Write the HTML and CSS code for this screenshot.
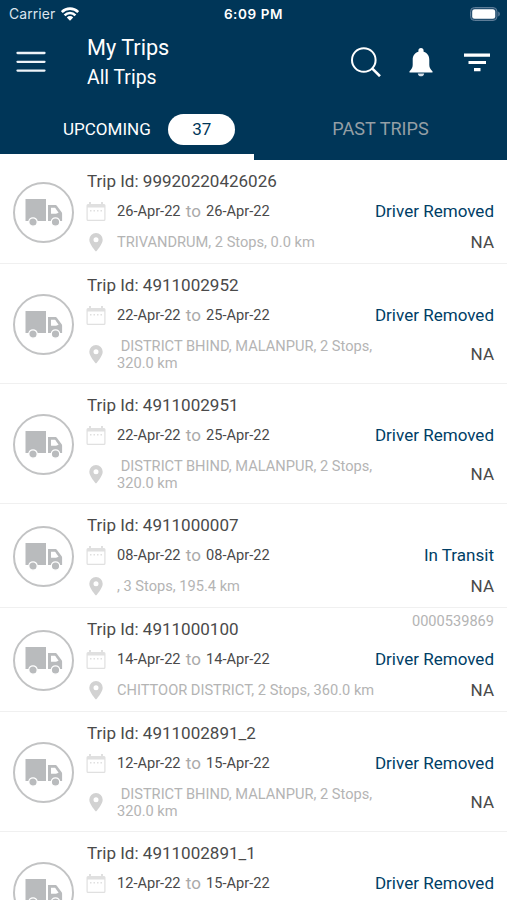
FILE: index.html
```html
<!DOCTYPE html>
<html lang="en">
<head>
<meta charset="utf-8">
<title>My Trips</title>
<link rel="stylesheet" href="styles.css">
</head>
<body>
<svg class="defs" aria-hidden="true">
  <symbol id="truck" viewBox="0 0 38 29">
    <path fill="#b9bbbd" d="M.5 1h20.500v22H.5zM23 7h7c1 0 1.500.3 2 1l4.500 6c.4.500.6 1 .6 1.600V23H23z"/>
    <path fill="#fff" d="M26 9.800h3.300c.5 0 .8.100 1.100.5l3.200 4.500-2.600.9H26z"/>
    <circle cx="8" cy="24" r="4.200" fill="#b9bbbd" stroke="#fff" stroke-width="1.200"/>
    <circle cx="30.500" cy="24" r="4.200" fill="#b9bbbd" stroke="#fff" stroke-width="1.200"/>
  </symbol>
  <symbol id="calendar" viewBox="0 0 20 19">
    <path fill="currentColor" fill-rule="evenodd" d="M3 0h2v2h10V0h2v2h1a1.500 1.500 0 0 1 1.500 1.500v14A1.500 1.500 0 0 1 18 19H2A1.500 1.500 0 0 1 .5 17.500v-14A1.500 1.500 0 0 1 2 2h1zM1.700 5.500v11.700c0 .4.200.6.600.6h15.400c.4 0 .6-.2.600-.6V5.500z"/>
    <path fill="currentColor" d="M4 8h1.500v1.500H4zM7.500 8H9v1.500H7.500zM11 8h1.500v1.500H11zM14.500 8H16v1.500h-1.500z"/>
  </symbol>
  <symbol id="pin" viewBox="0 0 14 19">
    <path fill="currentColor" fill-rule="evenodd" d="M7 0a6.700 6.700 0 0 0-6.700 6.700C.3 11.500 7 18.500 7 18.500s6.700-7 6.700-11.800A6.700 6.700 0 0 0 7 0zm0 4.200a2.500 2.500 0 1 1 0 5 2.500 2.500 0 0 1 0-5z"/>
  </symbol>
</svg>

<header class="header">
  <div class="status">
    <div class="carrier"><span>Carrier</span>
      <svg width="18" height="14" viewBox="0 0 18 14"><g fill="none" stroke="#fff" stroke-width="2.600"><path d="M.8 5a11.600 11.600 0 0 1 16.400 0"/><path d="M3.600 8.300a7.600 7.600 0 0 1 10.800 0"/></g><path fill="#fff" d="M5.800 10.400a4.500 4.500 0 0 1 6.400 0L9 13.700z"/></svg>
    </div>
    <div class="clock">6:09 PM</div>
    <svg class="battery" width="30" height="14" viewBox="0 0 30 14"><rect x=".5" y=".5" width="26.500" height="13" rx="4" fill="#244f70" stroke="#5d7d98"/><rect x="2.200" y="2.200" width="23" height="9.600" rx="2.500" fill="#fff"/><path d="M28.300 4.500q1.500.7 1.500 2.500t-1.500 2.500z" fill="#6985a0"/></svg>
  </div>
  <div class="bar">
    <svg class="menu" width="30" height="22" viewBox="0 0 30 22"><path d="M1.500 2h27M1.500 10.800h27M1.500 19.600h27" stroke="#eef3f8" stroke-width="2.300" stroke-linecap="round"/></svg>
    <div class="titles"><h1>My Trips</h1><h2>All Trips</h2></div>
    <div class="actions">
      <svg width="30" height="30" viewBox="0 0 30 30"><g fill="none" stroke="#fff" stroke-width="2"><circle cx="12.800" cy="13" r="11.800"/><path d="M21.100 21.300l7.900 7.900" stroke-width="2.600"/></g></svg>
      <svg width="24" height="29" viewBox="0 0 24 29"><path fill="#fff" d="M12 0c1.600 0 2.600 1 2.600 2.700v1.100C18.800 5 20.300 8.300 20.300 12v5c0 3 1.500 4.500 3.200 6.200v1.300H.5v-1.300C2.200 21.500 3.700 20 3.700 17v-5c0-3.700 1.500-7 5.700-8.200V2.700C9.400 1 10.400 0 12 0z"/><path fill="#d5dee7" d="M8.800 25.500h6.400c-.4 3.800-6 3.800-6.400 0z"/></svg>
      <svg width="26" height="19" viewBox="0 0 26 19"><path fill="#fff" d="M0 .5h26v3.200H0zM4.500 8h17.500v3H4.500zM10 15h6.500v3.200H10z"/></svg>
    </div>
  </div>
  <nav class="tabs">
    <div class="tab active"><span class="upcoming">UPCOMING</span><span class="count">37</span></div>
    <div class="tab"><span class="past">PAST TRIPS</span></div>
  </nav>
</header>

<main>
  <article class="trip">
    <div class="avatar"><svg><use href="#truck"/></svg></div>
    <div class="info">
      <div class="line top"><span class="id">Trip Id: 99920220426026</span></div>
      <div class="line"><svg class="cal"><use href="#calendar"/></svg><span class="dates">26-Apr-22<i>to</i>26-Apr-22</span><span class="state">Driver Removed</span></div>
      <div class="line place"><svg class="pin"><use href="#pin"/></svg><span class="route">TRIVANDRUM, 2 Stops, 0.0 km</span><span class="na">NA</span></div>
    </div>
  </article>
  <article class="trip">
    <div class="avatar"><svg><use href="#truck"/></svg></div>
    <div class="info">
      <div class="line top"><span class="id">Trip Id: 4911002952</span></div>
      <div class="line"><svg class="cal"><use href="#calendar"/></svg><span class="dates">22-Apr-22<i>to</i>25-Apr-22</span><span class="state">Driver Removed</span></div>
      <div class="line place two"><svg class="pin"><use href="#pin"/></svg><span class="route"> DISTRICT BHIND, MALANPUR, 2 Stops,
320.0 km</span><span class="na">NA</span></div>
    </div>
  </article>
  <article class="trip">
    <div class="avatar"><svg><use href="#truck"/></svg></div>
    <div class="info">
      <div class="line top"><span class="id">Trip Id: 4911002951</span></div>
      <div class="line"><svg class="cal"><use href="#calendar"/></svg><span class="dates">22-Apr-22<i>to</i>25-Apr-22</span><span class="state">Driver Removed</span></div>
      <div class="line place two"><svg class="pin"><use href="#pin"/></svg><span class="route"> DISTRICT BHIND, MALANPUR, 2 Stops,
320.0 km</span><span class="na">NA</span></div>
    </div>
  </article>
  <article class="trip">
    <div class="avatar"><svg><use href="#truck"/></svg></div>
    <div class="info">
      <div class="line top"><span class="id">Trip Id: 4911000007</span></div>
      <div class="line"><svg class="cal"><use href="#calendar"/></svg><span class="dates">08-Apr-22<i>to</i>08-Apr-22</span><span class="state">In Transit</span></div>
      <div class="line place"><svg class="pin"><use href="#pin"/></svg><span class="route">, 3 Stops, 195.4 km</span><span class="na">NA</span></div>
    </div>
  </article>
  <article class="trip">
    <div class="avatar"><svg><use href="#truck"/></svg></div>
    <div class="info">
      <div class="line top"><span class="id">Trip Id: 4911000100</span><span class="ref">0000539869</span></div>
      <div class="line"><svg class="cal"><use href="#calendar"/></svg><span class="dates">14-Apr-22<i>to</i>14-Apr-22</span><span class="state">Driver Removed</span></div>
      <div class="line place"><svg class="pin"><use href="#pin"/></svg><span class="route">CHITTOOR DISTRICT, 2 Stops, 360.0 km</span><span class="na">NA</span></div>
    </div>
  </article>
  <article class="trip">
    <div class="avatar"><svg><use href="#truck"/></svg></div>
    <div class="info">
      <div class="line top"><span class="id">Trip Id: 4911002891_2</span></div>
      <div class="line"><svg class="cal"><use href="#calendar"/></svg><span class="dates">12-Apr-22<i>to</i>15-Apr-22</span><span class="state">Driver Removed</span></div>
      <div class="line place two"><svg class="pin"><use href="#pin"/></svg><span class="route"> DISTRICT BHIND, MALANPUR, 2 Stops,
320.0 km</span><span class="na">NA</span></div>
    </div>
  </article>
  <article class="trip">
    <div class="avatar"><svg><use href="#truck"/></svg></div>
    <div class="info">
      <div class="line top"><span class="id">Trip Id: 4911002891_1</span></div>
      <div class="line"><svg class="cal"><use href="#calendar"/></svg><span class="dates">12-Apr-22<i>to</i>15-Apr-22</span><span class="state">Driver Removed</span></div>
      <div class="line place two"></div>
    </div>
  </article>
</main>
</body>
</html>
```
FILE: styles.css
```css
* { box-sizing: border-box; }
body {
  margin: 0;
  height: 900px;
  overflow: hidden;
  display: flex;
  flex-direction: column;
  background: #fff;
  font-family: Roboto, sans-serif;
  color: #4a4a4a;
}
svg { display: block; flex: none; }
.defs { display: none; }
.header { flex: none; height: 160px; background: #003658; color: #fff; }
.status {
  height: 27px;
  padding: 0 7px 0 9px;
  display: grid;
  grid-template-columns: 1fr auto 1fr;
  align-items: center;
  font-family: Inter, sans-serif;
}
.carrier { display: flex; align-items: center; gap: 6px; font-size: 13.900px; letter-spacing: 0.1px; color: #dbe5ee; }
.clock { font-size: 13.500px; font-weight: 600; letter-spacing: 0.6px; margin-right: 2px; }
.battery { justify-self: end; }
.bar { height: 70px; display: flex; align-items: center; padding: 0 17px 0 16px; }
.titles { margin-left: 41px; padding-top: 2px; flex: 1; }
h1, h2 { margin: 0; font-weight: 400; }
h1 { font-size: 21.700px; line-height: 30px; }
h2 { font-size: 19.400px; line-height: 30px; }
.actions { display: flex; align-items: center; }
.actions svg + svg { margin-left: 29px; }
.actions svg + svg + svg { margin-left: 31px; }
.actions svg:first-child { margin-right: -1px; }
.tabs { display: flex; height: 63px; }
.tab { width: 253px; height: 63px; display: flex; align-items: center; justify-content: center; font-size: 17.050px; }
.active { width: 254px; border-bottom: 6px solid #fff; justify-content: flex-start; padding: 7px 0 0 63px; gap: 17.500px; }
.count {
  width: 67px;
  height: 31px;
  border-radius: 16px;
  background: #fff;
  color: #003658;
  display: flex;
  align-items: center;
  justify-content: center;
}
.past { color: #959fa5; font-size: 18.100px; }
main { flex: 1; overflow: hidden; }
.trip { display: flex; border-bottom: 1px solid #f0f0f0; padding-bottom: 6px; }
.avatar {
  flex: none;
  align-self: center;
  width: 61px;
  height: 61px;
  margin: 7px 13px 0;
  border: 2px solid #c2c3c4;
  border-radius: 50%;
  display: flex;
  align-items: center;
  justify-content: center;
}
.avatar svg { width: 38px; height: 29px; }
.info { flex: 1; padding: 6px 13px 0 0; }
.line { height: 31px; display: flex; align-items: center; }
.top { height: 30px; justify-content: space-between; }
.id { font-size: 17.050px; }
.ref { font-size: 14.600px; line-height: 15px; color: #b4b4b4; align-self: flex-start; }
.cal { width: 20px; height: 19px; margin: 0 11px 0 -1px; color: #e0e0e0; }
.dates { display: flex; align-items: center; height: 29px; margin-bottom: 1px; font-size: 14.600px; }
.dates i { width: 25.500px; text-align: center; font-style: normal; font-size: 17px; color: #aaa; }
.state, .na { margin-left: auto; font-size: 17.050px; }
.state { color: #003e66; margin-bottom: 1px; }
.place { height: 30px; }
.two { height: 46px; }
.two .route { padding-top: 1px; }
.pin { width: 14px; height: 19px; margin: 0 14px 0 2px; color: #d2d2d2; }
.route { font-size: 14.640px; line-height: 17px; color: #b4b4b4; white-space: pre; }
```
